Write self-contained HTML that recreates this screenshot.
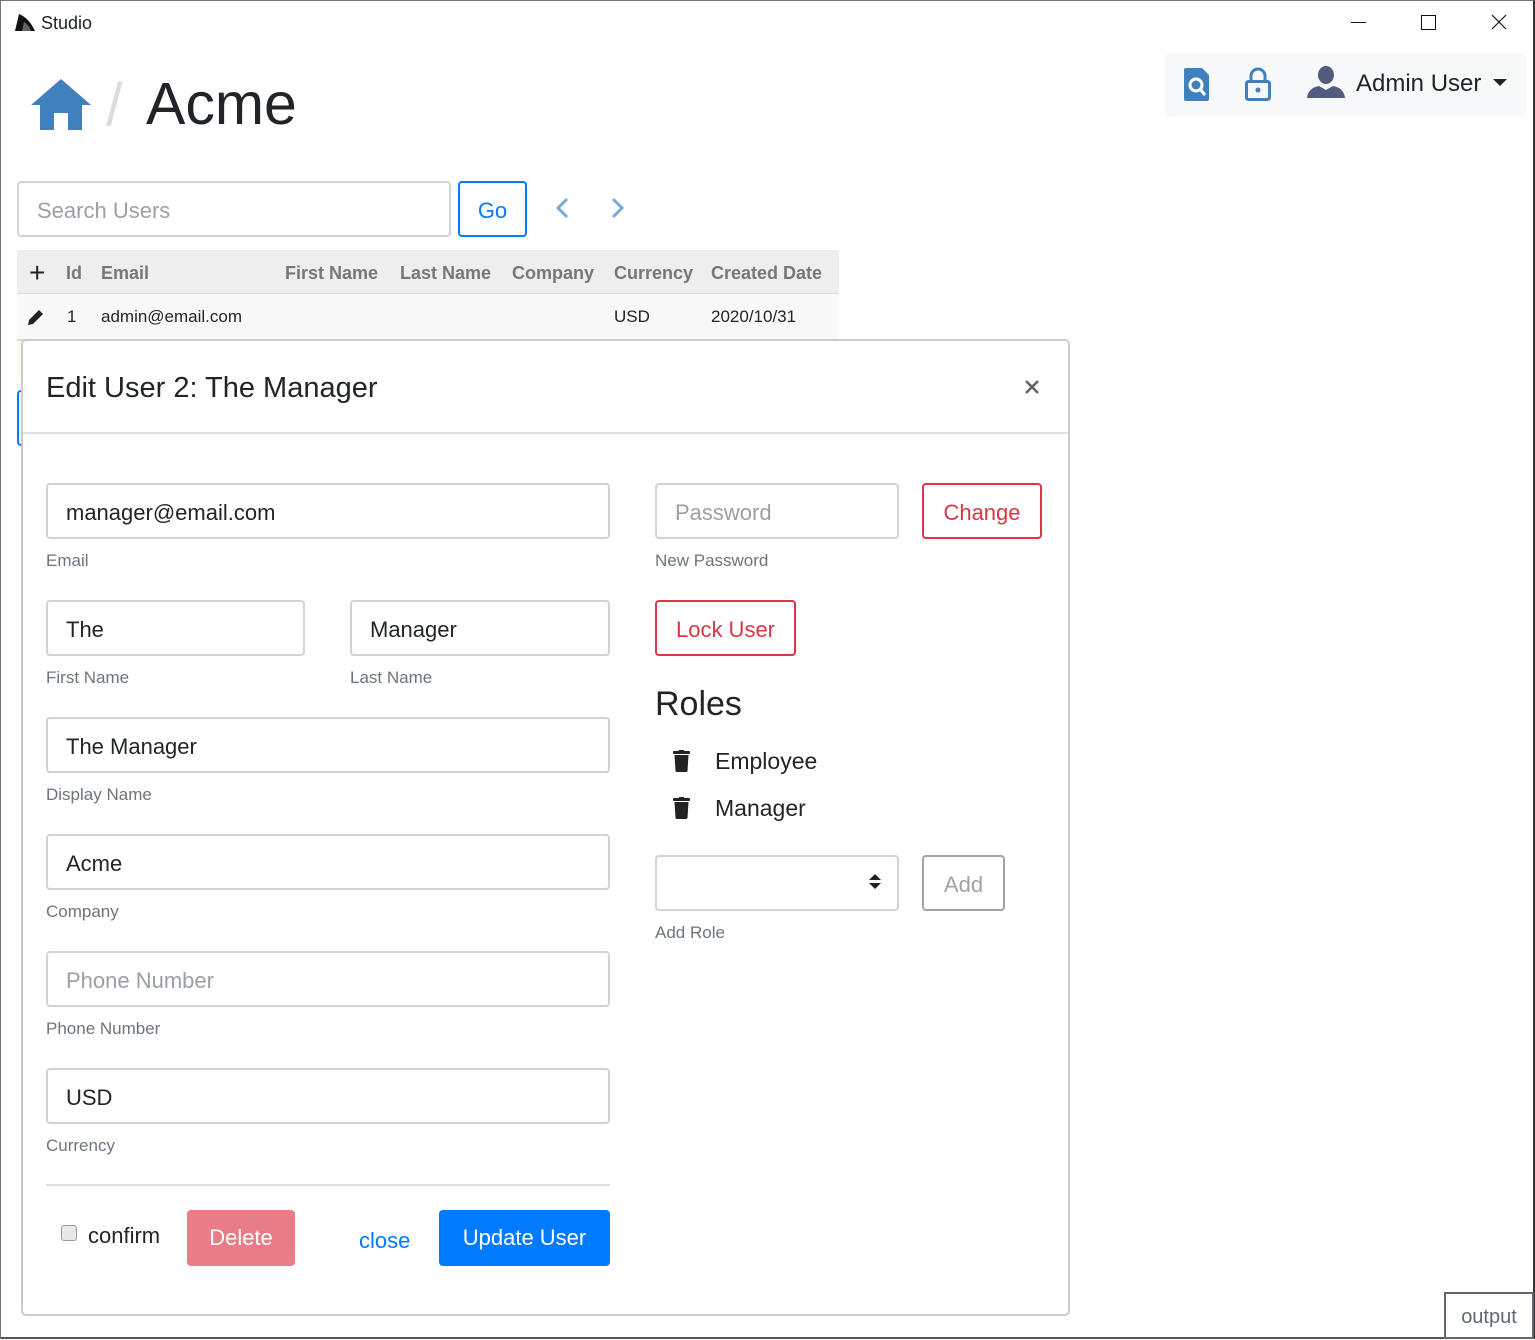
<!DOCTYPE html>
<html><head><meta charset="utf-8"><style>
*{box-sizing:border-box;margin:0;padding:0}
body{width:1535px;height:1339px;position:relative;overflow:hidden;background:#fff;font-family:"Liberation Sans",sans-serif;color:#212529}
.a{position:absolute}
.win{left:0;top:0;width:1535px;height:1339px;border:1px solid #777;border-right:2px solid #333;border-bottom:2px solid #555}
.inp{position:absolute;border:2px solid #ced4da;border-radius:4px;height:56px;font-size:22px;line-height:56px;padding-left:18px;color:#212529;background:#fff}
.ph{color:#9aa0a6}
.lbl{position:absolute;font-size:17px;color:#6c757d}
.btn{position:absolute;border-radius:4px;height:56px;font-size:22px;line-height:55px;text-align:center}
.th{position:absolute;top:263px;font-size:18px;font-weight:bold;color:#777}
</style></head><body>
<div class="a win"></div>
<!-- title bar -->
<svg class="a" style="left:14px;top:12px" width="22" height="20" viewBox="0 0 22 20"><path d="M1 19 L5 2 Q15 6 21 19 Z" fill="#111"/><path d="M8 19 L10 10 Q15 13 17 19Z" fill="#fff" opacity=".35"/></svg>
<div class="a" style="left:41px;top:13px;font-size:18px">Studio</div>
<div class="a" style="left:1351px;top:22px;width:15px;height:1px;background:#111"></div>
<div class="a" style="left:1421px;top:15px;width:15px;height:15px;border:1px solid #111"></div>
<svg class="a" style="left:1491px;top:14px" width="16" height="16" viewBox="0 0 16 16"><path d="M1 1 L15 15 M15 1 L1 15" stroke="#111" stroke-width="1.2"/></svg>
<!-- header -->
<svg class="a" style="left:31px;top:79px" width="60" height="52" viewBox="0 0 60 52"><path d="M30 0 L60 26 L51 26 L51 51 L37 51 L37 34 L23 34 L23 51 L9 51 L9 26 L0 26Z" fill="#4080bd"/></svg>
<div class="a" style="left:106px;top:70px;font-size:60px;color:#ddd">/</div>
<div class="a" style="left:146px;top:70px;font-size:59px;color:#212529">Acme</div>
<div class="a" style="left:1165px;top:53px;width:361px;height:64px;background:#f7f8fa;border-radius:6px"></div>
<svg class="a" style="left:1184px;top:68px" width="26" height="33" viewBox="0 0 26 33"><path d="M2 0 H18 L25 7 V31 Q25 33 23 33 H2 Q0 33 0 31 V2 Q0 0 2 0Z" fill="#4080bd"/><circle cx="12" cy="17" r="6" fill="none" stroke="#fff" stroke-width="3"/><path d="M16 21 L21 27" stroke="#fff" stroke-width="3"/></svg>
<svg class="a" style="left:1245px;top:67px" width="26" height="34" viewBox="0 0 26 34"><path d="M6 14 V9 A7 7 0 0 1 20 9 V14" fill="none" stroke="#4080bd" stroke-width="3"/><rect x="1.5" y="14.5" width="23" height="18" rx="2" fill="none" stroke="#4080bd" stroke-width="3"/><circle cx="13" cy="23" r="2.5" fill="#4080bd"/></svg>
<svg class="a" style="left:1307px;top:66px" width="38" height="32" viewBox="0 0 38 32"><ellipse cx="19" cy="9" rx="8" ry="9" fill="#525c7c"/><path d="M0 32 Q1 22 12 20 L19 24 L26 20 Q37 22 38 32Z" fill="#525c7c"/></svg>
<div class="a" style="left:1356px;top:70px;font-size:24px">Admin User</div>
<div class="a" style="left:1493px;top:79px;width:0;height:0;border-left:7px solid transparent;border-right:7px solid transparent;border-top:7px solid #222"></div>
<!-- search -->
<div class="inp ph" style="left:17px;top:181px;width:434px">Search Users</div>
<div class="btn" style="left:458px;top:181px;width:69px;border:2px solid #007bff;color:#007bff">Go</div>
<svg class="a" style="left:555px;top:197px" width="14" height="22" viewBox="0 0 14 22"><path d="M12 2 L3 11 L12 20" fill="none" stroke="#7aaad6" stroke-width="3"/></svg>
<svg class="a" style="left:611px;top:197px" width="14" height="22" viewBox="0 0 14 22"><path d="M2 2 L11 11 L2 20" fill="none" stroke="#7aaad6" stroke-width="3"/></svg>
<!-- table -->
<div class="a" style="left:17px;top:250px;width:822px;height:44px;background:#eee;border-bottom:1px solid #ddd"></div>
<div class="a" style="left:17px;top:295px;width:822px;height:44px;background:#f8f8f8"></div>
<div class="a" style="left:17px;top:339px;width:822px;height:38px;background:#fffce8;border-top:2px solid #e0dcb0"></div>
<div class="a" style="left:17px;top:390px;width:20px;height:56px;border:2px solid #007bff;border-radius:4px"></div>
<div class="a" style="left:29px;top:257px;font-size:28px;color:#222">+</div>
<div class="th" style="left:66px">Id</div>
<div class="th" style="left:101px">Email</div>
<div class="th" style="left:285px">First Name</div>
<div class="th" style="left:400px">Last Name</div>
<div class="th" style="left:512px">Company</div>
<div class="th" style="left:614px">Currency</div>
<div class="th" style="left:711px">Created Date</div>
<svg class="a" style="left:27px;top:308px" width="18" height="18" viewBox="0 0 18 18"><path d="M1 17 L2 12 L12 2 L16 6 L6 16Z" fill="#222"/></svg>
<div class="a" style="left:67px;top:307px;font-size:17px">1</div>
<div class="a" style="left:101px;top:307px;font-size:17px">admin@email.com</div>
<div class="a" style="left:614px;top:307px;font-size:17px">USD</div>
<div class="a" style="left:711px;top:307px;font-size:17px">2020/10/31</div>
<!-- modal -->
<div class="a" style="left:21px;top:339px;width:1049px;height:977px;background:#fff;border:2px solid #ccc;border-radius:5px"></div>
<div class="a" style="left:23px;top:432px;width:1045px;height:2px;background:#dee2e6"></div>
<div class="a" style="left:46px;top:372px;font-size:29px;color:#212529">Edit User 2: The Manager</div>
<svg class="a" style="left:1024px;top:379px" width="16" height="16" viewBox="0 0 16 16"><path d="M2 2 L14 14 M14 2 L2 14" stroke="#666" stroke-width="2.6"/></svg>

<div class="inp" style="left:46px;top:483px;width:564px">manager@email.com</div>
<div class="lbl" style="left:46px;top:551px">Email</div>
<div class="inp" style="left:46px;top:600px;width:259px">The</div>
<div class="inp" style="left:350px;top:600px;width:260px">Manager</div>
<div class="lbl" style="left:46px;top:668px">First Name</div>
<div class="lbl" style="left:350px;top:668px">Last Name</div>
<div class="inp" style="left:46px;top:717px;width:564px">The Manager</div>
<div class="lbl" style="left:46px;top:785px">Display Name</div>
<div class="inp" style="left:46px;top:834px;width:564px">Acme</div>
<div class="lbl" style="left:46px;top:902px">Company</div>
<div class="inp ph" style="left:46px;top:951px;width:564px">Phone Number</div>
<div class="lbl" style="left:46px;top:1019px">Phone Number</div>
<div class="inp" style="left:46px;top:1068px;width:564px">USD</div>
<div class="lbl" style="left:46px;top:1136px">Currency</div>
<div class="a" style="left:46px;top:1184px;width:564px;height:2px;background:#dee2e6"></div>

<div class="a" style="left:61px;top:1225px;width:16px;height:16px;border:1px solid #999;border-radius:3px;background:#e8e8e8"></div>
<div class="a" style="left:88px;top:1223px;font-size:22px">confirm</div>
<div class="btn" style="left:187px;top:1210px;width:108px;background:#e87d87;color:#fff">Delete</div>
<div class="a" style="left:359px;top:1228px;font-size:22px;color:#007bff">close</div>
<div class="btn" style="left:439px;top:1210px;width:171px;background:#007bff;color:#fff">Update User</div>

<div class="inp ph" style="left:655px;top:483px;width:244px">Password</div>
<div class="btn" style="left:922px;top:483px;width:120px;border:2px solid #dc3545;color:#dc3545">Change</div>
<div class="lbl" style="left:655px;top:551px">New Password</div>
<div class="btn" style="left:655px;top:600px;width:141px;border:2px solid #dc3545;color:#dc3545">Lock User</div>
<div class="a" style="left:655px;top:685px;font-size:34px">Roles</div>
<svg class="a" style="left:673px;top:750px" width="17" height="22" viewBox="0 0 17 22"><rect x="0" y="1" width="17" height="3" rx="1" fill="#222"/><rect x="6" y="0" width="5" height="2" fill="#222"/><path d="M1.5 5 H15.5 L14.5 21 Q14.4 22 13 22 H4 Q2.6 22 2.5 21Z" fill="#222"/></svg>
<div class="a" style="left:715px;top:748px;font-size:23px">Employee</div>
<svg class="a" style="left:673px;top:797px" width="17" height="22" viewBox="0 0 17 22"><rect x="0" y="1" width="17" height="3" rx="1" fill="#222"/><rect x="6" y="0" width="5" height="2" fill="#222"/><path d="M1.5 5 H15.5 L14.5 21 Q14.4 22 13 22 H4 Q2.6 22 2.5 21Z" fill="#222"/></svg>
<div class="a" style="left:715px;top:795px;font-size:23px">Manager</div>
<div class="inp" style="left:655px;top:855px;width:244px"></div>
<div class="a" style="left:869px;top:874px;border-left:6px solid transparent;border-right:6px solid transparent;border-bottom:6px solid #222"></div>
<div class="a" style="left:869px;top:883px;border-left:6px solid transparent;border-right:6px solid transparent;border-top:6px solid #222"></div>
<div class="btn" style="left:922px;top:855px;width:83px;border:2px solid #a0a4a8;color:#a0a4a8">Add</div>
<div class="lbl" style="left:655px;top:923px">Add Role</div>

<div class="a" style="left:1444px;top:1292px;width:90px;height:47px;border:2px solid #5f6870;background:#fff;font-size:20px;color:#5f6870;text-align:center;line-height:46px">output</div>
</body></html>
